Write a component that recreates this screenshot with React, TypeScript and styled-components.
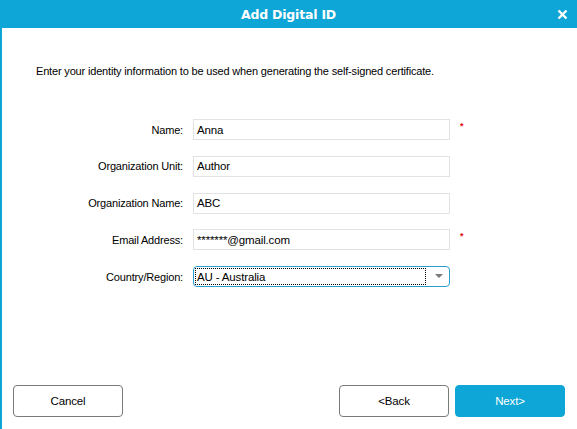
import { styled, createGlobalStyle } from "styled-components";

const GlobalStyle = createGlobalStyle`
  html, body {
    margin: 0;
    padding: 0;
    background: #fff;
  }
  body {
    font-family: "Liberation Sans", Arial, sans-serif;
  }
`;

const Window = styled.div`
  display: flex;
  flex-direction: column;
  width: 577px;
  height: 429px;
  background: #fff;
  overflow: hidden;
`;

const TitleBar = styled.div`
  position: relative;
  display: flex;
  align-items: center;
  justify-content: center;
  height: 28px;
  flex-shrink: 0;
  background: #0ea6d6;
  color: #fff;
  font-family: "DejaVu Sans", "Liberation Sans", sans-serif;
  font-size: 12.5px;
  font-weight: bold;
  letter-spacing: -0.2px;
`;

const CloseButton = styled.div`
  position: absolute;
  right: 9px;
  top: 8px;
  width: 12px;
  height: 12px;
  display: flex;
  align-items: center;
  justify-content: center;
`;

const Body = styled.div`
  display: flex;
  flex-direction: column;
  flex: 1;
  border-left: 2px solid #0ea6d6;
`;

const Intro = styled.div`
  margin: 36px 0 0 34px;
  height: 14px;
  font-size: 11px;
  line-height: 14px;
  letter-spacing: -0.17px;
  color: #000;
`;

const Form = styled.div`
  display: flex;
  flex-direction: column;
  gap: 15.75px;
  margin-top: 41px;
`;

const Row = styled.div`
  display: flex;
  align-items: center;
  height: 21px;
`;

const Label = styled.div`
  width: 181px;
  text-align: right;
  font-size: 11px;
  letter-spacing: -0.17px;
  color: #000;
`;

const Field = styled.div`
  box-sizing: border-box;
  display: flex;
  align-items: center;
  width: 257px;
  height: 21px;
  margin-left: 10px;
  padding-left: 3px;
  border: 1px solid #e3e3e3;
  font-size: 11.5px;
  letter-spacing: -0.15px;
  color: #000;
`;

const Select = styled(Field)`
  border: 1px solid #2b9ed0;
  border-radius: 4px;
  padding: 1px;
`;

const FocusBox = styled.div`
  box-sizing: border-box;
  display: flex;
  align-items: center;
  flex: 1;
  height: 17px;
  margin-right: 22px;
  padding-left: 1px;
  border: 1px dotted #000;
`;

const SelectWrap = styled.div`
  position: relative;
`;

const Arrow = styled.div`
  position: absolute;
  right: 7px;
  top: 8px;
  width: 0;
  height: 0;
  border-left: 4px solid transparent;
  border-right: 4px solid transparent;
  border-top: 4px solid #7a7a7a;
`;

const Required = styled.span`
  margin-left: 10px;
  margin-top: -8px;
  color: #e01010;
  font-size: 9px;
  font-weight: bold;
`;

const Footer = styled.div`
  display: flex;
  align-items: center;
  margin-top: auto;
  padding: 0 12px 12px 11px;
  gap: 6px;
`;

const Spacer = styled.div`
  flex: 1;
`;

const Button = styled.button<{ $primary?: boolean }>`
  box-sizing: border-box;
  width: 110px;
  height: 32px;
  border-radius: 4px;
  border: 1px solid ${(p) => (p.$primary ? "#0ea6d6" : "#7a7a7a")};
  background: ${(p) => (p.$primary ? "#0ea6d6" : "#fff")};
  color: ${(p) => (p.$primary ? "#fff" : "#000")};
  font-family: "Liberation Sans", Arial, sans-serif;
  font-size: 11.5px;
  letter-spacing: -0.15px;
  padding: 0;
`;

const fields = [
  { label: "Name:", value: "Anna", required: true },
  { label: "Organization Unit:", value: "Author" },
  { label: "Organization Name:", value: "ABC" },
  { label: "Email Address:", value: "*******@gmail.com", required: true },
];

export default function App() {
  return (
    <Window>
      <GlobalStyle />
      <TitleBar>
        Add Digital ID
        <CloseButton>
          <svg width="11" height="11" viewBox="0 0 11 11">
            <path d="M1.5 1.5 L9.5 9.5 M9.5 1.5 L1.5 9.5" stroke="#fff" strokeWidth="2.4" />
          </svg>
        </CloseButton>
      </TitleBar>
      <Body>
        <Intro>
          Enter your identity information to be used when generating the self-signed certificate.
        </Intro>
        <Form>
          {fields.map((f) => (
            <Row key={f.label}>
              <Label>{f.label}</Label>
              <Field>{f.value}</Field>
              {f.required && <Required>*</Required>}
            </Row>
          ))}
          <Row>
            <Label>Country/Region:</Label>
            <SelectWrap>
              <Select>
                <FocusBox>AU - Australia</FocusBox>
              </Select>
              <Arrow />
            </SelectWrap>
          </Row>
        </Form>
        <Footer>
          <Button>Cancel</Button>
          <Spacer />
          <Button>&lt;Back</Button>
          <Button $primary>Next&gt;</Button>
        </Footer>
      </Body>
    </Window>
  );
}
